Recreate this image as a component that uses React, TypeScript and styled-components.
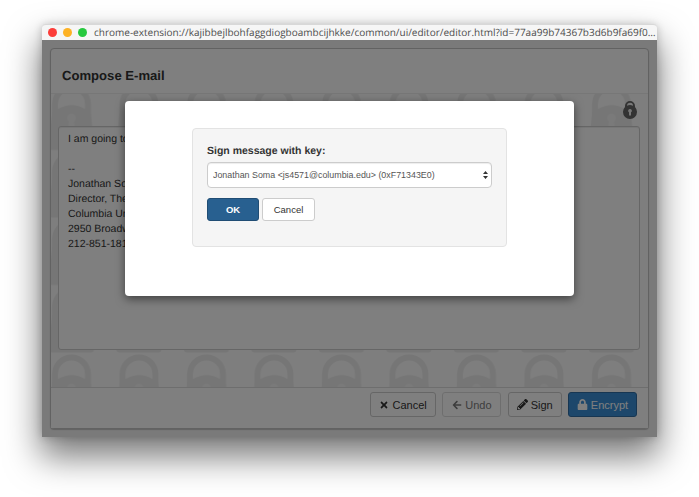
import React from 'react';
import styled, {createGlobalStyle} from 'styled-components';
import {FaArrowLeft, FaLock, FaPencilAlt, FaTimes} from 'react-icons/fa';

const GlobalStyle = createGlobalStyle`
    html, body {
        margin: 0;
        padding: 0;
        background: #fff;
    }
    body {
        font-family: "Liberation Sans", Arial, sans-serif;
        color: #333;
        text-rendering: geometricPrecision;
    }
`

const SIGNATURE = [
    'I am going to',
    '',
    '--',
    'Jonathan Soma',
    'Director, The Lede Program',
    'Columbia University',
    '2950 Broadway',
    '212-851-1811',
]

const LockTile = () => (
    <Pattern aria-hidden="true">
        <defs>
            <pattern id="locks" width="67.5" height="67.5" x="-13" y="-11" patternUnits="userSpaceOnUse">
                <path
                    fill="#ececec"
                    fillRule="evenodd"
                    d="M14 21a19.500 19.500 0 0 1 39 0v9l3 34q0 3-3 3H14q-3 0-3-3l3-34zM20 21v5q14-8 27 0v-5a13.500 13.500 0 0 0-27 0z"
                />
                <circle cx="33.500" cy="35" r="4.500" fill="#f4f4f4"/>
                <path d="M31 37h5l2 14h-9z" fill="#f4f4f4"/>
            </pattern>
        </defs>
        <rect width="100%" height="100%" fill="url(#locks)"/>
    </Pattern>
)

const PadlockIcon = () => (
    <svg width="14" height="19" viewBox="0 0 14 19" aria-hidden="true">
        <path
            fill="#666"
            fillRule="evenodd"
            d="M2 7V6a5 5 0 0 1 10 0v1a7 7 0 0 1 2 5v0a7 7 0 0 1-14 0v0a7 7 0 0 1 2-5zM4 5.700q3-1.400 6 0a3 3 0 0 0-6 0zM7 9a1.800 1.800 0 0 0-1 3.300V15.500h2V12.300A1.800 1.800 0 0 0 7 9z"
        />
    </svg>
)

const SelectArrows = () => (
    <ArrowsBox width="5" height="10" viewBox="0 0 5 10" aria-hidden="true">
        <path d="M2.500 1L5 4H0zM2.500 9L0 6h5z" fill="#333"/>
    </ArrowsBox>
)

export default function App() {
    return (
        <Page>
            <GlobalStyle/>
            <Window>
                <TitleBar>
                    <Light $color="#fc3d39"/>
                    <Light $color="#fdb225"/>
                    <Light $color="#27c93f"/>
                    <Url>chrome-extension://kajibbejlbohfaggdiogboambcijhkke/common/ui/editor/editor.html?id=77aa99b74367b3d6b9fa69f0…</Url>
                </TitleBar>
                <Content>
                    <Panel>
                        <PanelHeader>Compose E-mail</PanelHeader>
                        <PanelBody>
                            <LockTile/>
                            <LockSlot><PadlockIcon/></LockSlot>
                            <MessageBox>
                                {SIGNATURE.map((line, i) => <MessageLine key={i}>{line}</MessageLine>)}
                            </MessageBox>
                        </PanelBody>
                        <PanelFooter>
                            <FooterButton type="button" $width={66}><FaTimes size={10}/>Cancel</FooterButton>
                            <FooterButton type="button" $width={59} $disabled><FaArrowLeft size={10}/>Undo</FooterButton>
                            <FooterButton type="button" $width={54}><FaPencilAlt size={11}/>Sign</FooterButton>
                            <FooterButton type="button" $width={69} $primary><FaLock size={11}/>Encrypt</FooterButton>
                        </PanelFooter>
                    </Panel>
                    <Backdrop>
                        <Modal>
                            <Well>
                                <Label htmlFor="key">Sign message with key:</Label>
                                <SelectWrap>
                                    <KeySelect id="key" defaultValue="0xF71343E0">
                                        <option value="0xF71343E0">Jonathan Soma &lt;js4571@columbia.edu&gt; (0xF71343E0)</option>
                                    </KeySelect>
                                    <SelectArrows/>
                                </SelectWrap>
                                <ButtonRow>
                                    <ModalButton type="button" $primary>OK</ModalButton>
                                    <ModalButton type="button">Cancel</ModalButton>
                                </ButtonRow>
                            </Well>
                        </Modal>
                    </Backdrop>
                </Content>
            </Window>
        </Page>
    );
}

const Page = styled.div`
    width: 699px;
    height: 497px;
    box-sizing: border-box;
    padding: 25px 42px 60px;
    overflow: hidden;
`

const Window = styled.div`
    height: 412px;
    display: flex;
    flex-direction: column;
    border-radius: 4px 4px 2px 2px;
    box-shadow: 0 0 8px rgba(0, 0, 0, .22), 0 18px 34px 2px rgba(0, 0, 0, .52);
`

const TitleBar = styled.div`
    height: 15px;
    flex: none;
    display: flex;
    align-items: center;
    gap: 6px;
    padding: 0 11px 0 6px;
    background: #f6f6f6;
    border-radius: 4px 4px 0 0;
    border-top: 1px solid #d8d8d8;
    margin-top: -1px;
`

const Light = styled.span<{ $color: string }>`
    width: 9px;
    height: 9px;
    flex: none;
    border-radius: 50%;
    background: ${props => props.$color};
`

const Url = styled.span`
    margin-left: 1px;
    font-family: "Open Sans", "DejaVu Sans", sans-serif;
    font-size: 10px;
    line-height: 15px;
    color: #4c4c4c;
    white-space: nowrap;
`

const Content = styled.div`
    position: relative;
    flex: 1;
    min-height: 0;
    display: flex;
    padding: 8px;
    background: #f4f4f4;
`

const Panel = styled.div`
    flex: 1;
    display: flex;
    flex-direction: column;
    background: #fff;
    border: 1px solid #c4c4c4;
    border-radius: 4px;
    box-shadow: 0 1px 1px rgba(0, 0, 0, .2);
`

const PanelHeader = styled.div`
    height: 45px;
    flex: none;
    box-sizing: border-box;
    padding: 19px 0 0 11px;
    font-size: 13.100px;
    line-height: 16px;
    font-weight: bold;
    color: #333;
    border-bottom: 1px solid #eee;
`

const PanelBody = styled.div`
    position: relative;
    flex: 1;
    min-height: 0;
    display: flex;
    flex-direction: column;
    padding: 6px 8px 37px 7px;
    background: #fdfdfd;
`

const Pattern = styled.svg`
    position: absolute;
    inset: 0;
    width: 100%;
    height: 100%;
`

const LockSlot = styled.div`
    position: relative;
    height: 26px;
    flex: none;
    display: flex;
    justify-content: flex-end;
    padding-right: 3px;
`

const MessageBox = styled.div`
    position: relative;
    flex: 1;
    box-sizing: border-box;
    padding: 5px 9px;
    background: #fff;
    border: 1px solid #ccc;
    border-radius: 3px;
    box-shadow: inset 0 1px 1px rgba(0, 0, 0, .075);
`

const MessageLine = styled.div`
    height: 15px;
    font-size: 10.500px;
    line-height: 15px;
    color: #333;
`

const PanelFooter = styled.div`
    height: 41px;
    flex: none;
    box-sizing: border-box;
    display: flex;
    justify-content: flex-end;
    gap: 6.300px;
    padding: 4px 11px 0 0;
    background: #fff;
    border-top: 1px solid #ddd;
`

const FooterButton = styled.button<{ $width: number; $primary?: boolean; $disabled?: boolean }>`
    width: ${props => props.$width}px;
    height: 25px;
    box-sizing: border-box;
    display: flex;
    align-items: center;
    justify-content: center;
    gap: 3px;
    padding: 0;
    font-family: inherit;
    font-size: 11px;
    color: ${props => props.$primary ? '#fff' : '#333'};
    background: ${props => props.$primary ? '#3a8fd6' : '#fff'};
    border: 1px solid ${props => props.$primary ? '#2e6da4' : '#ccc'};
    border-radius: 3px;
    opacity: ${props => props.$disabled ? .65 : 1};
`

const Backdrop = styled.div`
    position: absolute;
    inset: 0;
    display: flex;
    justify-content: center;
    align-items: flex-start;
    padding-top: 61px;
    background: rgba(0, 0, 0, .5);
`

const Modal = styled.div`
    width: 449px;
    height: 195px;
    box-sizing: border-box;
    padding: 27px 67px;
    background: #fff;
    border-radius: 4px;
    box-shadow: 0 3px 10px rgba(0, 0, 0, .5);
`

const Well = styled.div`
    height: 119px;
    box-sizing: border-box;
    padding: 15px 14px;
    background: #f5f5f5;
    border: 1px solid #e3e3e3;
    border-radius: 4px;
`

const Label = styled.label`
    display: block;
    margin-bottom: 4px;
    font-size: 10.500px;
    line-height: 14px;
    font-weight: bold;
    color: #333;
`

const SelectWrap = styled.div`
    position: relative;
`

const KeySelect = styled.select`
    display: block;
    width: 100%;
    height: 26px;
    box-sizing: border-box;
    padding: 0 5px;
    appearance: none;
    font-family: inherit;
    font-size: 8.900px;
    color: #555;
    background: #fff;
    border: 1px solid #ccc;
    border-radius: 4px;
    box-shadow: inset 0 1px 1px rgba(0, 0, 0, .075);
`

const ArrowsBox = styled.svg`
    position: absolute;
    right: 4px;
    top: 8px;
`

const ButtonRow = styled.div`
    display: flex;
    gap: 3px;
    margin-top: 10px;
`

const ModalButton = styled.button<{ $primary?: boolean }>`
    height: 23px;
    box-sizing: border-box;
    padding: 0;
    width: ${props => props.$primary ? '52px' : '53px'};
    font-family: inherit;
    font-size: 9.500px;
    font-weight: ${props => props.$primary ? 'bold' : 'normal'};
    color: ${props => props.$primary ? '#fff' : '#333'};
    background: ${props => props.$primary ? '#286090' : '#fff'};
    border: 1px solid ${props => props.$primary ? '#204d74' : '#ccc'};
    border-radius: 3px;
`
